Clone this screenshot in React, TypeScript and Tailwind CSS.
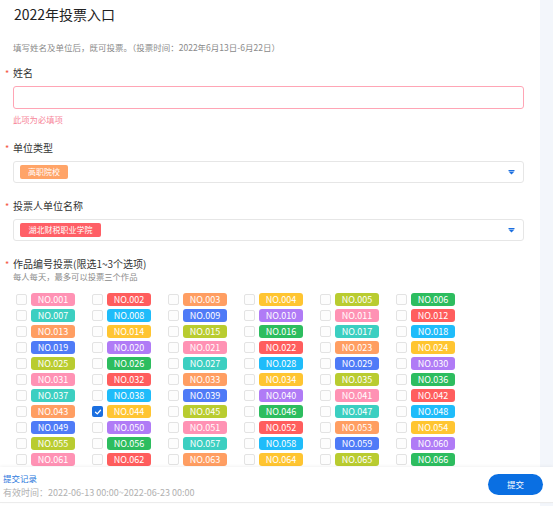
import React from "react";

const COLORS = [
  "bg-[#ff92b4]",
  "bg-[#ff5d5d]",
  "bg-[#ff9e62]",
  "bg-[#ffc531]",
  "bg-[#b9cc30]",
  "bg-[#2dbd5f]",
  "bg-[#3ccfc1]",
  "bg-[#1fbcfa]",
  "bg-[#4f7bf7]",
  "bg-[#b07bf6]",
];

function Label({ children }: { children: React.ReactNode }) {
  return (
    <div className="flex items-center h-[14px] leading-[14px] text-[10px] text-[#333]">
      <span className="w-[8px] text-[#f5553d] text-[9px] leading-[14px] pt-[2px]">*</span>
      <span>{children}</span>
    </div>
  );
}

function Arrow() {
  return (
    <svg width="7" height="5" viewBox="0 0 7 5" className="mr-[8px]">
      <rect x="0.5" y="0" width="6" height="1" fill="#1b6fe0" />
      <path d="M0.5 1.6 H6.5 L3.5 4.6 Z" fill="#1b6fe0" />
    </svg>
  );
}

export default function App() {
  const items = Array.from({ length: 72 }, (_, i) => i + 1);
  return (
    <div className="relative w-[553px] h-[506px] overflow-hidden bg-white font-['Noto_Sans_CJK_SC','Noto_Sans',sans-serif]">
      <div className="flex h-full">
        <div className="w-[540px] bg-white pl-[5px] pr-[16px]">
          <div className="pl-[9px] pt-[4px] text-[14px] leading-[20px] text-[#222]">2022年投票入口</div>
          <div className="pl-[8px] mt-[17px] text-[8.5px] leading-[12px] text-[#8a8a8a]">
            填写姓名及单位后，既可投票。（投票时间：2022年6月13日-6月22日）
          </div>
          <div className="mt-[13px]">
            <Label>姓名</Label>
          </div>
          <div className="ml-[8px] mt-[6px] h-[23px] rounded-[3px] border border-[#ffa5b5] bg-white" />
          <div className="ml-[8px] mt-[5px] text-[8.3px] leading-[10px] text-[#f7879b]">此项为必填项</div>

          <div className="mt-[17px]">
            <Label>单位类型</Label>
          </div>
          <div className="ml-[8px] mt-[6px] h-[22px] rounded-[3px] border border-[#e6e6e6] flex items-center justify-between pl-[6px]">
            <span className="h-[14px] leading-[14px] px-[8px] rounded-[2px] bg-[#ffa468] text-white text-[8px]">高职院校</span>
            <Arrow />
          </div>

          <div className="mt-[16px]">
            <Label>投票人单位名称</Label>
          </div>
          <div className="ml-[8px] mt-[6px] h-[22px] rounded-[3px] border border-[#e6e6e6] flex items-center justify-between pl-[6px]">
            <span className="h-[14px] leading-[14px] px-[8.5px] rounded-[2px] bg-[#ff5f66] text-white text-[8px]">湖北财税职业学院</span>
            <Arrow />
          </div>

          <div className="mt-[16px]">
            <Label>作品编号投票(限选1~3个选项)</Label>
          </div>
          <div className="pl-[8px] text-[8.3px] leading-[10px] text-[#8a8a8a]">每人每天，最多可以投票三个作品</div>

          <div className="ml-[11px] mt-[12px] grid grid-cols-[repeat(6,76px)] gap-y-[3px]">
            {items.map((n) => {
              const checked = n === 44;
              const hidden = n > 66;
              return (
                <div key={n} className="flex items-center gap-[4px] h-[13px]">
                  {checked ? (
                    <span className="w-[11px] h-[11px] rounded-[2px] bg-[#1b6fe0] flex items-center justify-center">
                      <svg width="8" height="8" viewBox="0 0 8 8">
                        <path d="M1.5 4.2 L3.3 5.9 L6.5 2.3" stroke="white" strokeWidth="1.3" fill="none" strokeLinecap="round" strokeLinejoin="round" />
                      </svg>
                    </span>
                  ) : (
                    <span className="w-[11px] h-[11px] rounded-[2px] border border-[#e3e3e3] bg-[#fdfdfd]" />
                  )}
                  <span
                    className={`w-[44px] h-[13px] rounded-[3px] text-white text-[9px] leading-[13px] text-center ${COLORS[(n - 1) % 10]}`}
                  >
                    {hidden ? "" : `NO.${String(n).padStart(3, "0")}`}
                  </span>
                </div>
              );
            })}
          </div>
        </div>
        <div className="flex-1 bg-[#f3f6fb]" />
      </div>

      <div className="absolute left-0 right-0 top-[467px] h-[36px] bg-white border-b border-[#ececec] shadow-[0_-1px_3px_rgba(0,0,0,0.05)] flex items-center justify-between pl-[3px] pr-[10px]">
        <div className="flex flex-col">
          <span className="text-[8.5px] leading-[12px] text-[#2a78dd]">提交记录</span>
          <span className="mt-[3px] text-[9px] leading-[11px] text-[#b0b0b0]">有效时间：2022-06-13 00:00~2022-06-23 00:00</span>
        </div>
        <button className="w-[55px] h-[21px] rounded-full bg-[#0a6fe2] text-white text-[8.5px] leading-[21px]">提交</button>
      </div>
    </div>
  );
}
